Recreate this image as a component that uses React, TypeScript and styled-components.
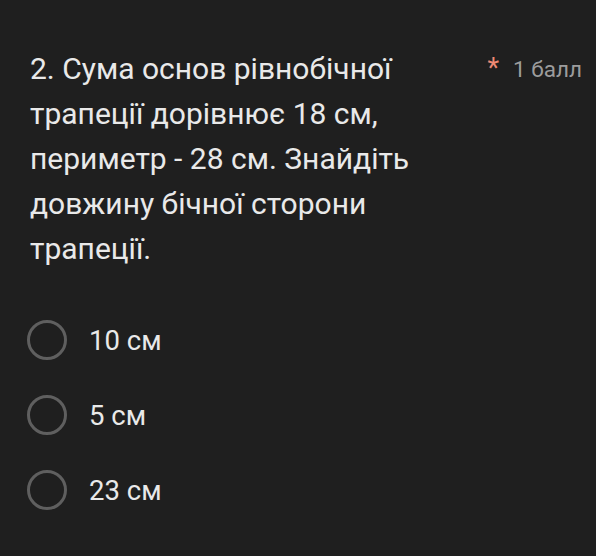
import React from 'react'
import styled, { createGlobalStyle } from 'styled-components'

const GlobalStyle = createGlobalStyle`
  html, body {
    margin: 0;
    padding: 0;
    background: #1f1f1f;
  }
  body {
    font-family: Roboto, "Noto Sans", sans-serif;
    -webkit-font-smoothing: antialiased;
  }
`

const Card = styled.div`
  width: 596px;
  height: 556px;
  box-sizing: border-box;
  padding: 46px 14px 0 30px;
  background: #1f1f1f;
  color: #e9e9e9;
`

const Header = styled.div`
  display: flex;
  align-items: flex-start;
  justify-content: space-between;
`

const Question = styled.div`
  width: 410px;
  font-size: 30px;
  line-height: 45px;
`

const Points = styled.div`
  display: flex;
  align-items: baseline;
  gap: 14px;
  padding-top: 6px;
  font-size: 22.5px;
  color: #9c9c9c;
`

const Star = styled.span`
  color: #ee8a74;
  font-size: 27px;
`

const Options = styled.div`
  display: flex;
  flex-direction: column;
  gap: 35px;
  margin-top: 49px;
`

const Option = styled.label`
  display: flex;
  align-items: center;
  gap: 22px;
  font-size: 27.5px;
`

const Radio = styled.span`
  width: 34px;
  height: 34px;
  margin-left: -3px;
  border-radius: 50%;
  border: 3px solid #5f5f5f;
  flex: none;
`

const options = ['10 см', '5 см', '23 см']

export default function App() {
  return (
    <Card>
      <GlobalStyle />
      <Header>
        <Question>
          2. Сума основ рівнобічної трапеції дорівнює 18 см, периметр - 28 см. Знайдіть довжину бічної сторони трапеції.
        </Question>
        <Points>
          <Star>*</Star>
          <span>1 балл</span>
        </Points>
      </Header>
      <Options>
        {options.map((o) => (
          <Option key={o}>
            <Radio />
            {o}
          </Option>
        ))}
      </Options>
    </Card>
  )
}
